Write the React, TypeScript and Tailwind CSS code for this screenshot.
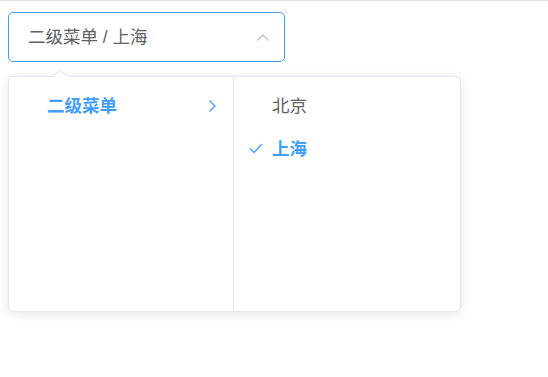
import React from "react";

const font = { fontFamily: '"Helvetica Neue", Helvetica, "PingFang SC", "Noto Sans CJK SC", sans-serif' };

export default function App() {
  return (
    <div className="w-[548px] h-[377px] bg-white border-t border-[#dcdfe6] pt-[11px] pl-[8px]" style={font}>
      <div className="w-[277px] h-[50px] border border-[#409eff] rounded-[5px] pl-[19px] pr-[14px] flex items-center justify-between">
        <span className="text-[17.5px] text-[#606266]">二级菜单 / 上海</span>
        <svg width="14" height="14" viewBox="0 0 14 14" className="mt-[1px]">
          <path d="M1.5 9.5 L7 4 L12.5 9.5" fill="none" stroke="#c0c4cc" strokeWidth="1.3" />
        </svg>
      </div>
      <div className="relative mt-[14px] w-[453px]">
        <div className="absolute left-[47px] top-[-5px] w-[10px] h-[10px] bg-white border-l border-t border-[#e4e7ed] rotate-45 z-10" />
        <div className="flex h-[236px] border border-[#e4e7ed] rounded-[5px] bg-white shadow-[0_2px_12px_0_rgba(0,0,0,0.1)] overflow-hidden">
          <div className="w-[225px] h-full border-r border-[#e4e7ed] pt-[8px]">
            <div className="relative h-[42.5px] flex items-center pl-[25px] pr-[37px]">
              <span className="px-[13px] text-[17.5px] font-bold text-[#409eff]">二级菜单</span>
              <svg width="9" height="14" viewBox="0 0 9 14" className="absolute right-[16px] top-[14px]">
                <path d="M1.5 1.5 L7 7 L1.5 12.5" fill="none" stroke="#409eff" strokeWidth="1.3" />
              </svg>
            </div>
          </div>
          <div className="flex-1 h-full pt-[8px]">
            <div className="relative h-[42.5px] flex items-center pl-[25px]">
              <span className="px-[13px] text-[17.5px] text-[#606266]">北京</span>
            </div>
            <div className="relative h-[42.5px] flex items-center pl-[25px]">
              <svg width="14" height="11" viewBox="0 0 14 11" className="absolute left-[15px] top-[15px]">
                <path d="M1 5.5 L5 9.5 L13 1" fill="none" stroke="#409eff" strokeWidth="1.3" />
              </svg>
              <span className="px-[13px] text-[17.5px] font-bold text-[#409eff]">上海</span>
            </div>
          </div>
        </div>
      </div>
    </div>
  );
}
